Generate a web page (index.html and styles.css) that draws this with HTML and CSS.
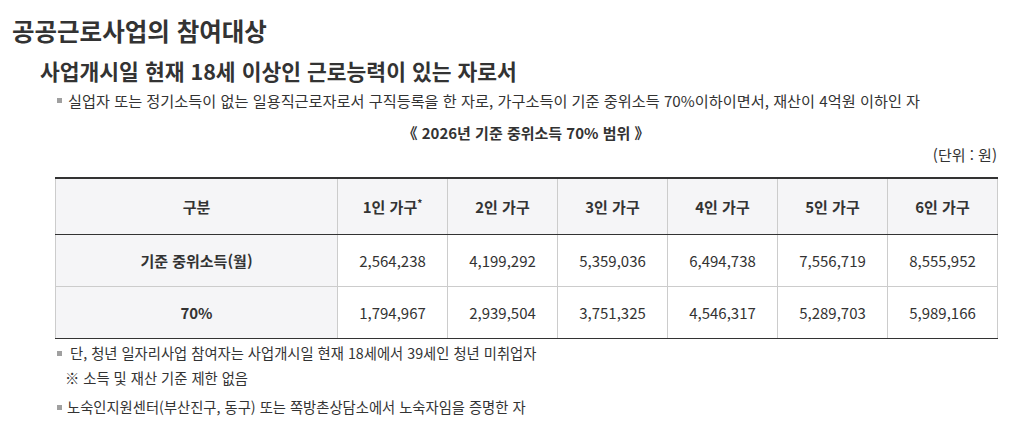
FILE: index.html
```html
<!DOCTYPE html>
<html lang="ko">
<head>
<meta charset="utf-8">
<title>공공근로사업의 참여대상</title>
<link rel="stylesheet" href="styles.css">
</head>
<body>
<div class="page">
  <h1 class="title">공공근로사업의 참여대상</h1>
  <h2 class="sub">사업개시일 현재 18세 이상인 근로능력이 있는 자로서</h2>
  <div class="content">
    <p class="bullet lead">실업자 또는 정기소득이 없는 일용직근로자로서 구직등록을 한 자로, 가구소득이 기준 중위소득 70%이하이면서, 재산이 4억원 이하인 자</p>
    <p class="caption">《 2026년 기준 중위소득 70% 범위 》</p>
    <p class="unit">(단위 : 원)</p>
    <table class="tbl">
      <colgroup>
        <col class="c-label">
        <col class="c-num"><col class="c-num"><col class="c-num"><col class="c-num"><col class="c-num"><col class="c-num">
      </colgroup>
      <thead>
        <tr>
          <th>구분</th>
          <th>1인 가구<sup>*</sup></th>
          <th>2인 가구</th>
          <th>3인 가구</th>
          <th>4인 가구</th>
          <th>5인 가구</th>
          <th>6인 가구</th>
        </tr>
      </thead>
      <tbody>
        <tr>
          <th>기준 중위소득(월)</th>
          <td>2,564,238</td><td>4,199,292</td><td>5,359,036</td><td>6,494,738</td><td>7,556,719</td><td>8,555,952</td>
        </tr>
        <tr>
          <th>70%</th>
          <td>1,794,967</td><td>2,939,504</td><td>3,751,325</td><td>4,546,317</td><td>5,289,703</td><td>5,989,166</td>
        </tr>
      </tbody>
    </table>
    <p class="bullet note1">단, 청년 일자리사업 참여자는 사업개시일 현재 18세에서 39세인 청년 미취업자</p>
    <p class="note2">※ 소득 및 재산 기준 제한 없음</p>
    <p class="bullet note3">노숙인지원센터(부산진구, 동구) 또는 쪽방촌상담소에서 노숙자임을 증명한 자</p>
  </div>
</div>
</body>
</html>
```
FILE: styles.css
```css
* { box-sizing: border-box; }
html, body { margin: 0; padding: 0; background: #fff; }
body {
  font-family: "Noto Sans CJK KR", "Noto Sans", sans-serif;
  color: #333;
}
.page { padding: 16px 0 0 12px; }
.title {
  margin: 0;
  font-size: 24.5px;
  line-height: 30px;
  font-weight: 700;
  color: #333;
}
.sub {
  margin: 11px 0 0 28px;
  font-size: 21.5px;
  line-height: 28px;
  font-weight: 700;
  color: #333;
}
.content {
  width: 985px;
  padding-left: 43px;
}
p { margin: 0; font-size: 14.3px; line-height: 20px; }
.bullet {
  position: relative;
  margin-top: 5px;
  padding-left: 13px;
}
.bullet::before {
  content: "";
  position: absolute;
  left: 2px;
  top: 8px;
  width: 5px;
  height: 5px;
  background: #a0a0a0;
}
.lead { font-size: 15.2px; }
.caption {
  margin-top: 13px;
  text-align: center;
  font-weight: 700;
  font-size: 15px;
}
.unit {
  margin-top: 2px;
  text-align: right;
  font-size: 15px;
}
.tbl {
  margin-top: 12px;
  width: 942px;
  border-collapse: collapse;
  table-layout: fixed;
  border-top: 2px solid #333;
  border-bottom: 1px solid #333;
}
.c-label { width: 282px; }
.c-num { width: 110px; }
.tbl th, .tbl td {
  border: 1px solid #ccc;
  text-align: center;
  font-size: 15px;
  padding: 0;
  color: #333;
}
.tbl thead th {
  height: 56px;
  background: #f5f5f7;
  font-weight: 700;
  border-bottom: 1px solid #333;
}
.tbl tbody th {
  background: #f5f5f7;
  font-weight: 700;
}
.tbl tbody th, .tbl tbody td { height: 52px; }
.tbl tbody tr:last-child th, .tbl tbody tr:last-child td { border-bottom: 1px solid #333; }
.tbl sup { font-size: 10px; line-height: 0; vertical-align: 6px; }
.note1 { margin-top: 4px; padding-left: 15px; }
.note2 { margin-top: 5px; padding-left: 10px; }
.note3 { margin-top: 9px; padding-left: 12px; }
```
